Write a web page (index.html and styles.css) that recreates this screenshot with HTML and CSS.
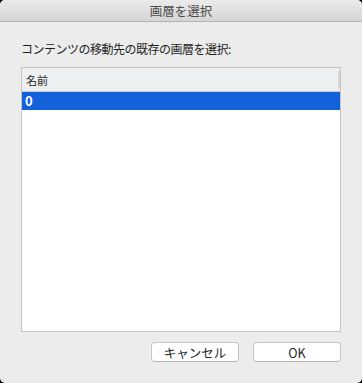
FILE: index.html
```html
<!DOCTYPE html>
<html lang="ja">

<head>
    <meta charset="UTF-8">
    <meta name="viewport" content="width=device-width, initial-scale=1.0">
    <title>画層を選択</title>
    <link rel="stylesheet" href="styles.css">
</head>

<body>
    <div class="window">
        <header class="titlebar">画層を選択</header>

        <main class="content">
            <p class="prompt">コンテンツの移動先の既存の画層を選択:</p>

            <div class="layer-list">
                <div class="list-header">
                    <span>名前</span>
                    <span class="col-sep"></span>
                </div>
                <div class="list-row selected">0</div>
            </div>

            <div class="actions">
                <button type="button" class="btn">キャンセル</button>
                <button type="button" class="btn">OK</button>
            </div>
        </main>
    </div>
</body>

</html>
```

FILE: styles.css
```css
/* ダイアログ全体 */
html,
body {
    margin: 0;
    padding: 0;
    height: 100%;
    background-color: #000;
}

body {
    font-family: "Noto Sans CJK JP", "Noto Sans", sans-serif;
    color: #1e1e1e;
}

.window {
    height: 100%;
    background-color: #ececec;
    border-radius: 5px;
    overflow: hidden;
    display: flex;
    flex-direction: column;
}

/* タイトルバー */
.titlebar {
    height: 21px;
    line-height: 21px;
    border-bottom: 1px solid #b3b3b3;
    background: linear-gradient(#ebebeb, #d5d5d5);
    text-align: center;
    font-size: 12.5px;
    color: #4a4a4a;
}

.content {
    padding: 19px 21px 0 21px;
}

.prompt {
    margin: 0;
    font-size: 12px;
    letter-spacing: -0.5px;
    line-height: 16px;
}

/* 画層リスト */
.layer-list {
    margin-top: 10px;
    height: 263px;
    border: 1px solid #c4c4c4;
    background-color: #fff;
}

.list-header {
    height: 23px;
    border-bottom: 1px solid #c9c9c9;
    background-color: #eeeff1;
    display: flex;
    align-items: center;
    justify-content: space-between;
    padding-left: 4px;
    font-size: 11px;
}

.col-sep {
    width: 2px;
    height: 18px;
    background-color: #d4d4d6;
}

.list-row {
    height: 18px;
    line-height: 18px;
    padding-left: 3px;
    font-size: 13px;
}

.selected {
    background-color: #1361db;
    color: #fff;
    font-weight: bold;
}

/* ボタン */
.actions {
    margin-top: 10px;
    display: flex;
    justify-content: flex-end;
    gap: 14px;
}

.btn {
    width: 88px;
    height: 20px;
    padding: 0;
    background-color: #fff;
    border: 1px solid #c5c5c5;
    border-bottom-color: #b5b5b5;
    border-radius: 4px;
    font-family: inherit;
    font-size: 12.5px;
    color: #1e1e1e;
}
```
